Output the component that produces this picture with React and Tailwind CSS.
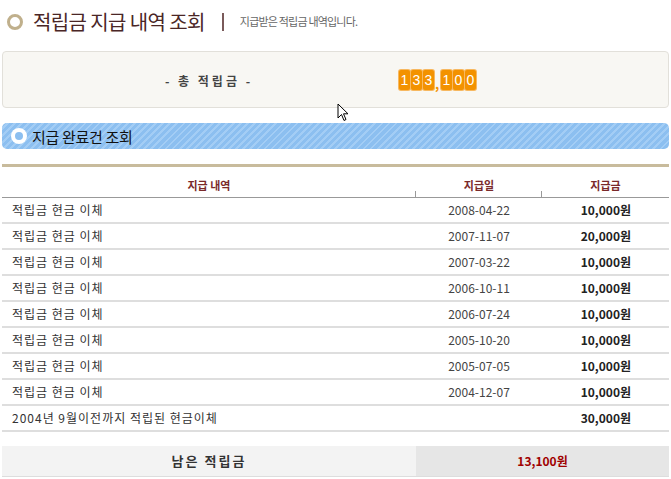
import React from 'react'

const rows = [
  { desc: '적립금 현금 이체', date: '2008-04-22', amount: '10,000원' },
  { desc: '적립금 현금 이체', date: '2007-11-07', amount: '20,000원' },
  { desc: '적립금 현금 이체', date: '2007-03-22', amount: '10,000원' },
  { desc: '적립금 현금 이체', date: '2006-10-11', amount: '10,000원' },
  { desc: '적립금 현금 이체', date: '2006-07-24', amount: '10,000원' },
  { desc: '적립금 현금 이체', date: '2005-10-20', amount: '10,000원' },
  { desc: '적립금 현금 이체', date: '2005-07-05', amount: '10,000원' },
  { desc: '적립금 현금 이체', date: '2004-12-07', amount: '10,000원' },
  { desc: '2004년 9월이전까지 적립된 현금이체', date: '', amount: '30,000원' },
]

const font = { fontFamily: '"Noto Sans CJK KR", "Noto Sans", sans-serif' }

function Digits({ value }) {
  return (
    <div className="flex items-end gap-[1px]">
      {value.split('').map((ch, i) =>
        ch === ',' ? (
          <span key={i} className="text-[#f39200] text-[13px] font-bold leading-none w-[5px]">,</span>
        ) : (
          <span key={i} className="w-[11px] h-[20px] rounded-[2px] bg-[#f39200] text-white text-[14px] leading-[20px] text-center font-['Liberation_Sans_Narrow','Liberation_Sans',sans-serif] shadow-[0_0_0_1px_#f7b860]">
            {ch}
          </span>
        )
      )}
    </div>
  )
}

export default function App() {
  return (
    <div className="w-[671px] h-[479px] bg-white relative overflow-hidden" style={font}>
      {/* Title */}
      <div className="flex items-center h-[43px] pl-[7px]">
        <span className="w-[16px] h-[16px] rounded-full border-[3px] border-[#c0b08c]" />
        <h1 className="ml-[10px] text-[20px] leading-none text-[#4a2626] tracking-[-0.6px]">적립금 지급 내역 조회</h1>
        <span className="ml-[17px] w-[2px] h-[18px] bg-[#7a5a5a]" />
        <span className="ml-[16px] text-[11px] text-[#666] tracking-[-0.8px]">지급받은 적립금 내역입니다.</span>
      </div>

      {/* Total box */}
      <div className="mx-[2px] mt-[8px] h-[57px] rounded-[4px] border border-[#e2e0da] bg-[#f8f7f3] flex items-center">
        <div className="w-[396px] text-center text-[12px] font-bold text-[#444] tracking-[3px] pt-[2px] pl-[16px]">- 총 적립금 -</div>
        <Digits value="133,100" />
      </div>

      {/* Section bar */}
      <div className="mx-[2px] mt-[15px] h-[26px] rounded-[5px] flex items-center pl-[9px]
        bg-[#8cbff0] bg-[repeating-linear-gradient(135deg,#8cbff0_0px,#8cbff0_3px,#a3cdf5_3px,#a3cdf5_5px)]">
        <span className="w-[16px] h-[16px] rounded-full bg-white flex items-center justify-center">
          <span className="w-[8px] h-[8px] rounded-full bg-[#8cbff0]" />
        </span>
        <span className="ml-[5px] text-[15px] leading-none text-[#111] tracking-[-0.3px]">지급 완료건 조회</span>
      </div>

      {/* Table */}
      <div className="mx-[2px] mt-[15px] border-t-[3px] border-[#c8bb9c]">
        <div className="mt-[6px] h-[25px] grid grid-cols-[414px_126px_127px] border-b border-[#999] text-[11px] text-[#7a2a2a] font-bold">
          <div className="relative flex items-center justify-center">지급 내역
            <span className="absolute right-0 bottom-0 w-px h-[6px] bg-[#999]" />
          </div>
          <div className="relative flex items-center justify-center">지급일
            <span className="absolute right-0 bottom-0 w-px h-[6px] bg-[#999]" />
          </div>
          <div className="flex items-center justify-center">지급금</div>
        </div>
        {rows.map((r, i) => (
          <div key={i} className="h-[26px] grid grid-cols-[414px_126px_127px] border-b-2 border-[#dedede] text-[12px] text-[#333]">
            <div className="flex items-center pl-[10px] tracking-[1px]">{r.desc}</div>
            <div className="flex items-center justify-center text-[12px] text-[#444]">{r.date}</div>
            <div className="flex items-center justify-end pr-[38px] font-bold text-[#222]">{r.amount}</div>
          </div>
        ))}

        {/* Summary */}
        <div className="mt-[14px] h-[31px] grid grid-cols-[414px_253px] border-b border-[#ddd]">
          <div className="bg-[#f3f3f3] flex items-center justify-center text-[13px] font-bold text-[#333] tracking-[2px]">남은 적립금</div>
          <div className="bg-[#e6e6e6] flex items-center justify-center text-[12px] font-bold text-[#a00000]">13,100원</div>
        </div>
      </div>

      {/* mouse cursor */}
      <svg className="absolute left-[337px] top-[103px]" width="13" height="20" viewBox="0 0 13 20">
        <path d="M1 1 L1 15 L4.5 11.5 L7 17.5 L9 16.5 L6.5 10.8 L11 10.8 Z" fill="#fff" stroke="#000" strokeWidth="1" />
      </svg>
    </div>
  )
}
